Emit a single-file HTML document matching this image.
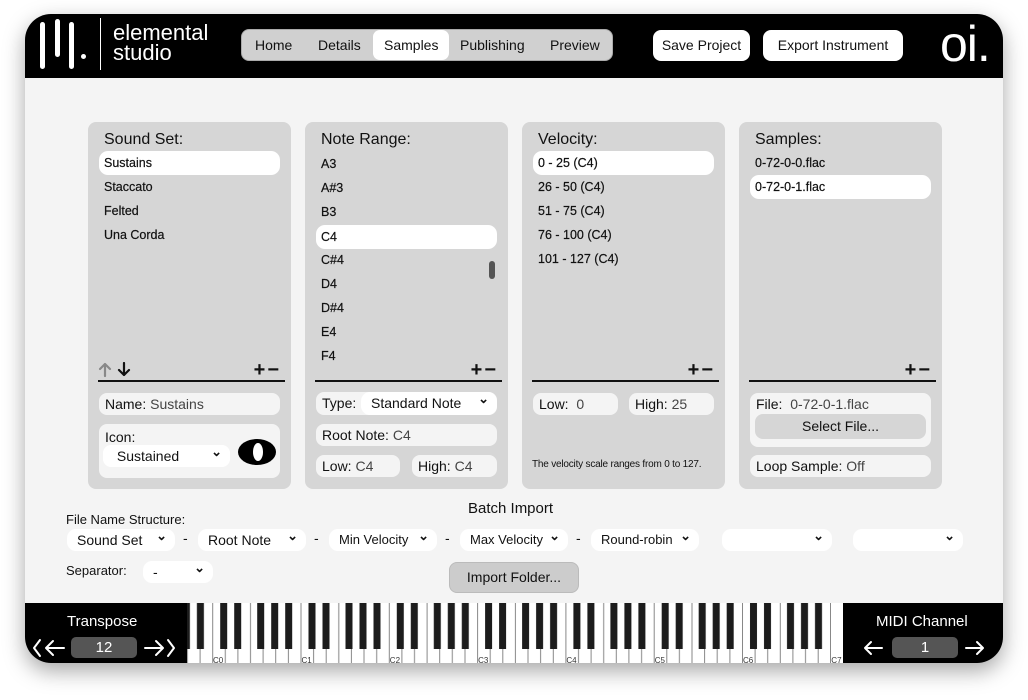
<!DOCTYPE html>
<html><head><meta charset="utf-8"><style>
*{box-sizing:border-box;margin:0;padding:0}
body{width:1028px;height:700px;background:#fff;font-family:"Liberation Sans",sans-serif;position:relative;overflow:hidden;color:#111}
.a{position:absolute}
#win{left:25px;top:14px;width:978px;height:649px;border-radius:26px;background:#f4f4f4;overflow:hidden;box-shadow:0 8px 22px rgba(0,0,0,.35)}
.panel{position:absolute;top:122px;width:203px;height:367px;background:#d6d6d6;border-radius:8px}
.ttl{position:absolute;left:16px;top:9px;font-size:16px}
.row{position:absolute;left:11px;width:181px;height:24px;line-height:24px;padding-left:5px;font-size:12.5px;border-radius:9px;-webkit-text-stroke:.2px #111}
.sel{background:#fff}
.pm{position:absolute;right:10px;top:237px;font-size:20px;font-weight:bold;letter-spacing:2px}
.hr{position:absolute;left:10px;right:6px;top:258px;height:2px;background:#111}
.fld{position:absolute;background:#f4f4f4;border-radius:8px;height:22px;line-height:22px;padding-left:6px;font-size:14px}
.fld span{color:#444}
.dd{position:absolute;background:#fff;border-radius:9px;height:22px;line-height:22px;font-size:14px;padding-left:10px}
.dd:after{content:"⌄";position:absolute;right:8px;top:-4px;font-size:13px;font-weight:bold}
.btn{position:absolute;background:#fff;border-radius:8px;font-size:14px;text-align:center;line-height:30px;height:31px;top:30px}
</style></head><body>
<div id="win" class="a">
 <div class="a" style="left:0;top:0;width:978px;height:64px;background:#000"></div>
 <div class="a" style="left:0;top:589px;width:978px;height:60px;background:#000"></div>
</div>
<div class="a" style="left:40px;top:22px;width:5px;height:47px;background:#fff;border-radius:3px"></div>
<div class="a" style="left:55px;top:19px;width:5px;height:38px;background:#fff;border-radius:3px"></div>
<div class="a" style="left:69px;top:22px;width:5px;height:47px;background:#fff;border-radius:3px"></div>
<div class="a" style="left:81px;top:54px;width:5px;height:5px;background:#fff;border-radius:50%"></div>
<div class="a" style="left:100px;top:18px;width:1px;height:52px;background:#fff"></div>
<div class="a" style="left:113px;top:23px;color:#fff;font-size:22px;line-height:20px">elemental<br>studio</div>
<div class="a" style="left:241px;top:29px;width:372px;height:32px;background:#d0d0d0;border-radius:8px;border:1px solid #aaa"></div>
<div class="a" style="left:373px;top:30px;width:76px;height:30px;background:#fff;border-radius:7px"></div>
<div class="a" style="left:255px;top:37px;font-size:14px">Home</div>
<div class="a" style="left:318px;top:37px;font-size:14px">Details</div>
<div class="a" style="left:384px;top:37px;font-size:14px">Samples</div>
<div class="a" style="left:460px;top:37px;font-size:14px">Publishing</div>
<div class="a" style="left:550px;top:37px;font-size:14px">Preview</div>
<div class="btn" style="left:653px;width:97px">Save Project</div>
<div class="btn" style="left:763px;width:140px">Export Instrument</div>
<div class="a" style="left:940px;top:17px;color:#fff;font-size:50px;line-height:54px;letter-spacing:-1px">oi.</div>

<div class="panel" style="left:88px">
 <div class="ttl">Sound Set:</div>
 <div class="row sel" style="top:29px">Sustains</div>
 <div class="row" style="top:53px">Staccato</div>
 <div class="row" style="top:77px">Felted</div>
 <div class="row" style="top:101px">Una Corda</div>
 <svg class="a" style="left:10px;top:240px" width="36" height="16" fill="none" stroke-width="2.2" stroke-linecap="round" stroke-linejoin="round">
  <path d="M7 14 V2 M2 7 L7 2 L12 7" stroke="#888"/>
  <path d="M26 1 V13 M21 8 L26 13 L31 8" stroke="#111"/>
 </svg>
 <div class="pm">+−</div><div class="hr"></div>
 <div class="fld" style="left:11px;top:271px;width:181px">Name: <span>Sustains</span></div>
 <div class="fld" style="left:11px;top:302px;width:181px;height:54px;line-height:20px;padding-top:3px">Icon:</div>
 <div class="dd" style="left:15px;top:323px;width:127px;border-radius:8px">&nbsp;Sustained</div>
 <div class="a" style="left:150px;top:317px;width:38px;height:26px;border-radius:50%;background:#000"></div>
 <div class="a" style="left:165px;top:321px;width:10px;height:18px;border-radius:50%;background:#fff"></div>
</div>
<div class="panel" style="left:305px;overflow:hidden">
 <div class="ttl">Note Range:</div>
 <div class="row" style="top:30px">A3</div>
 <div class="row" style="top:54px">A#3</div>
 <div class="row" style="top:78px">B3</div>
 <div class="row sel" style="top:103px">C4</div>
 <div class="row" style="top:126px">C#4</div>
 <div class="row" style="top:150px">D4</div>
 <div class="row" style="top:174px">D#4</div>
 <div class="row" style="top:198px">E4</div>
 <div class="row" style="top:222px;height:17px;overflow:hidden">F4</div>
 <div class="a" style="left:184px;top:139px;width:6px;height:18px;background:#555;border-radius:3px"></div>
 <div class="a" style="left:0;top:239px;width:203px;height:20px;background:#d6d6d6"></div>
 <div class="pm">+−</div><div class="hr"></div>
 <div class="fld" style="left:11px;top:270px;width:181px;height:23px">Type:</div>
 <div class="dd" style="left:56px;top:270px;width:136px;height:23px">Standard Note</div>
 <div class="fld" style="left:11px;top:302px;width:181px">Root Note: <span>C4</span></div>
 <div class="fld" style="left:11px;top:333px;width:84px">Low: <span>C4</span></div>
 <div class="fld" style="left:107px;top:333px;width:85px">High: <span>C4</span></div>
</div>
<div class="panel" style="left:522px">
 <div class="ttl">Velocity:</div>
 <div class="row sel" style="top:29px">0 - 25 (C4)</div>
 <div class="row" style="top:53px">26 - 50 (C4)</div>
 <div class="row" style="top:77px">51 - 75 (C4)</div>
 <div class="row" style="top:101px">76 - 100 (C4)</div>
 <div class="row" style="top:125px">101 - 127 (C4)</div>
 <div class="pm">+−</div><div class="hr"></div>
 <div class="fld" style="left:11px;top:271px;width:85px">Low: <span>&nbsp;0</span></div>
 <div class="fld" style="left:107px;top:271px;width:85px">High: <span>25</span></div>
 <div class="a" style="left:10px;top:337px;font-size:10px;letter-spacing:-.2px">The velocity scale ranges from 0 to 127.</div>
</div>
<div class="panel" style="left:739px">
 <div class="ttl">Samples:</div>
 <div class="row" style="top:29px">0-72-0-0.flac</div>
 <div class="row sel" style="top:53px">0-72-0-1.flac</div>
 <div class="pm">+−</div><div class="hr"></div>
 <div class="fld" style="left:11px;top:271px;width:181px;height:54px;line-height:20px;padding-top:1px">File: &nbsp;<span>0-72-0-1.flac</span></div>
 <div class="a" style="left:16px;top:292px;width:171px;height:25px;background:#d6d6d6;border-radius:8px;text-align:center;line-height:25px;font-size:14px">Select File...</div>
 <div class="fld" style="left:11px;top:333px;width:181px">Loop Sample: <span>Off</span></div>
</div>

<div class="a" style="left:468px;top:500px;font-size:15px">Batch Import</div>
<div class="a" style="left:66px;top:512px;font-size:13px">File Name Structure:</div>
<div class="dd" style="left:67px;top:529px;width:108px">Sound Set</div>
<div class="a" style="left:183px;top:530px;font-size:14px">-</div>
<div class="dd" style="left:198px;top:529px;width:108px">Root Note</div>
<div class="a" style="left:314px;top:530px;font-size:14px">-</div>
<div class="dd" style="left:329px;top:529px;width:108px;font-size:13px">Min Velocity</div>
<div class="a" style="left:445px;top:530px;font-size:14px">-</div>
<div class="dd" style="left:460px;top:529px;width:108px;font-size:13px">Max Velocity</div>
<div class="a" style="left:576px;top:530px;font-size:14px">-</div>
<div class="dd" style="left:591px;top:529px;width:108px;font-size:13px">Round-robin</div>
<div class="dd" style="left:722px;top:529px;width:110px"></div>
<div class="dd" style="left:853px;top:529px;width:110px"></div>
<div class="a" style="left:66px;top:563px;font-size:13px">Separator:</div>
<div class="dd" style="left:143px;top:561px;width:70px">-</div>
<div class="a" style="left:449px;top:562px;width:130px;height:31px;background:#ccc;border:1px solid #bbb;border-radius:8px;text-align:center;line-height:29px;font-size:14px">Import Folder...</div>

<div class="a" style="left:67px;top:613px;color:#fff;font-size:15px">Transpose</div>
<div class="a" style="left:71px;top:637px;width:66px;height:21px;background:#555;border-radius:5px;color:#fff;text-align:center;line-height:21px;font-size:15px">12</div>
<div class="a" style="left:876px;top:613px;color:#fff;font-size:15px">MIDI Channel</div>
<div class="a" style="left:892px;top:637px;width:66px;height:21px;background:#555;border-radius:5px;color:#fff;text-align:center;line-height:21px;font-size:15px">1</div>
<svg class="a" style="left:0;top:0" width="1028" height="700" fill="none" stroke="#fff" stroke-width="2" stroke-linecap="round" stroke-linejoin="round">
 <path d="M40 640 L34 648 L40 656"/><path d="M64 648 H46 M53 641 L46 648 L53 655"/>
 <path d="M145 648 H163 M156 641 L163 648 L156 655"/><path d="M168 640 L174 648 L168 656"/>
 <path d="M882 648 H865 M871 642 L865 648 L871 654"/>
 <path d="M966 648 H983 M977 642 L983 648 L977 654"/>
</svg>

<svg class="a" style="left:187px;top:603px" width="656" height="60" viewBox="0 0 656 60">
 <defs>
  <pattern id="oct" x="25.2" y="0" width="88.3" height="60" patternUnits="userSpaceOnUse">
   <rect width="88.3" height="60" fill="#fff"/>
   <g fill="#888"><rect x="0" y="0" width="1" height="60"/><rect x="12.6" width="1" height="60"/><rect x="25.2" width="1" height="60"/><rect x="37.8" width="1" height="60"/><rect x="50.4" width="1" height="60"/><rect x="63" width="1" height="60"/><rect x="75.7" width="1" height="60"/></g>
   <g fill="#1c1c1c"><rect x="8" width="7" height="46"/><rect x="22" width="7" height="46"/><rect x="45" width="7" height="46"/><rect x="59" width="7" height="46"/><rect x="73" width="7" height="46"/></g>
  </pattern>
 </defs>
 <rect width="656" height="60" fill="url(#oct)"/>
 <rect x="643.5" width="13" height="60" fill="#fff"/>
 <rect x="643" width="1" height="60" fill="#888"/>
 <g font-size="8" fill="#333" font-family="Liberation Sans">
  <text x="26" y="60">C0</text><text x="114.5" y="60">C1</text><text x="202.8" y="60">C2</text><text x="291.1" y="60">C3</text><text x="379.4" y="60">C4</text><text x="467.7" y="60">C5</text><text x="556" y="60">C6</text><text x="644.3" y="60">C7</text>
 </g>
</svg>
</body></html>
